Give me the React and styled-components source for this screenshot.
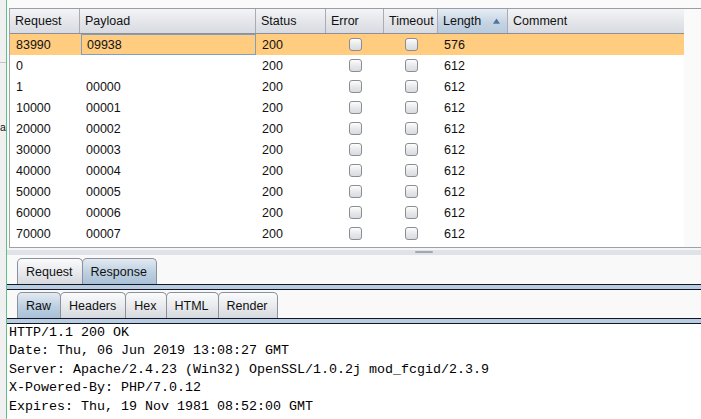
import styled, { createGlobalStyle } from "styled-components";

const GlobalStyle = createGlobalStyle`
  html, body {
    margin: 0;
    padding: 0;
    background: #f9f9f9;
    overflow: hidden;
  }
  * { box-sizing: border-box; }
`;

const columnas = [
  { nome: "Request", largura: 70 },
  { nome: "Payload", largura: 176 },
  { nome: "Status", largura: 70 },
  { nome: "Error", largura: 58 },
  { nome: "Timeout", largura: 54 },
  { nome: "Length", largura: 70, ordenada: true },
  { nome: "Comment", largura: 176 },
];

const linhas = [
  ["83990", "09938", "200", "576"],
  ["0", "", "200", "612"],
  ["1", "00000", "200", "612"],
  ["10000", "00001", "200", "612"],
  ["20000", "00002", "200", "612"],
  ["30000", "00003", "200", "612"],
  ["40000", "00004", "200", "612"],
  ["50000", "00005", "200", "612"],
  ["60000", "00006", "200", "612"],
  ["70000", "00007", "200", "612"],
];

const resposta = [
  "HTTP/1.1 200 OK",
  "Date: Thu, 06 Jun 2019 13:08:27 GMT",
  "Server: Apache/2.4.23 (Win32) OpenSSL/1.0.2j mod_fcgid/2.3.9",
  "X-Powered-By: PHP/7.0.12",
  "Expires: Thu, 19 Nov 1981 08:52:00 GMT",
  "Cache-Control: no-store, no-cache, must-revalidate",
];

const gridCols = columnas.map(c => `${c.largura}px`).join(" ");

export default function App() {
  return (
    <Tela>
      <GlobalStyle />
      <FaixaLateral>
        <LinhaLateral />
        <LetraCortada>a</LetraCortada>
      </FaixaLateral>
      <Principal>
        <Topo />
        <PainelRolagem>
          <Tabela>
            <Cabecalho>
              {columnas.map(c => (
                <CelulaCabecalho key={c.nome} $ordenada={c.ordenada}>
                  {c.nome}
                  {c.ordenada && (
                    <Seta viewBox="0 0 8 6">
                      <path d="M4 0 L8 6 L0 6 Z" fill="#4f74a0" />
                    </Seta>
                  )}
                </CelulaCabecalho>
              ))}
            </Cabecalho>
            {linhas.map((l, i) => (
              <Linha key={i} $selecionada={i === 0}>
                <Celula>{l[0]}</Celula>
                <Celula $foco={i === 0}>{l[1]}</Celula>
                <Celula>{l[2]}</Celula>
                <CelulaCaixa><Caixa /></CelulaCaixa>
                <CelulaCaixa><Caixa /></CelulaCaixa>
                <Celula>{l[3]}</Celula>
                <Celula />
              </Linha>
            ))}
          </Tabela>
        </PainelRolagem>
        <Divisor>
          <Pegador />
        </Divisor>
        <BarraAbas>
          <Aba>Request</Aba>
          <Aba $ativa>Response</Aba>
        </BarraAbas>
        <Faixa />
        <BarraAbas>
          <Aba $ativa>Raw</Aba>
          <Aba>Headers</Aba>
          <Aba>Hex</Aba>
          <Aba>HTML</Aba>
          <Aba>Render</Aba>
        </BarraAbas>
        <Faixa />
        <Texto>
          {resposta.map((t, i) => (
            <LinhaTexto key={i}>{t}</LinhaTexto>
          ))}
        </Texto>
      </Principal>
    </Tela>
  );
}

// Estilos
const Tela = styled.div`
  display: flex;
  width: 701px;
  height: 419px;
  overflow: hidden;
  font-family: "Liberation Sans", Arial, sans-serif;
  font-size: 12.5px;
  color: #111;
`;

const FaixaLateral = styled.div`
  width: 7px;
  flex-shrink: 0;
  background: #f0f0f0;
  border-right: 1px solid #5cc28a;
  overflow: hidden;
`;

const LinhaLateral = styled.div`
  margin-top: 62px;
  height: 1px;
  background: #c4c4c4;
`;

const LetraCortada = styled.div`
  margin-top: 57px;
  font-size: 10.5px;
  line-height: 14px;
`;

const Principal = styled.div`
  flex: 1;
  display: flex;
  flex-direction: column;
  min-width: 0;
  & > * { flex-shrink: 0; }
`;

const Topo = styled.div`
  height: 8px;
  background: #fafafa;
`;

const PainelRolagem = styled.div`
  margin-left: 2px;
  height: 240px;
  border-top: 1px solid #9c9ca6;
  border-left: 1px solid #a4a4a4;
  border-bottom: 1px solid #a0a0a8;
  background: #fafafa;
`;

const Tabela = styled.div`
  width: 674px;
  height: 100%;
  background: #ffffff;
`;

const Cabecalho = styled.div`
  display: grid;
  grid-template-columns: ${gridCols};
  height: 25px;
  border-bottom: 1px solid #8e8e96;
  border-right: 1px solid #8e8e96;
`;

const CelulaCabecalho = styled.div`
  display: flex;
  align-items: center;
  padding-left: 5px;
  border-right: 1px solid #a9acb4;
  background: ${p => p.$ordenada
    ? "linear-gradient(#e6edf4, #c3d3e2 60%, #b9cbdc)"
    : "linear-gradient(#f3f4f6, #e2e4e9 60%, #d8dbe1)"};
  &:last-child { border-right: none; }
`;

const Seta = styled.svg`
  width: 7px;
  height: 6px;
  margin-left: auto;
  margin-right: 7px;
`;

const Linha = styled.div`
  display: grid;
  grid-template-columns: ${gridCols};
  height: 21px;
  background: ${p => (p.$selecionada ? "#ffcc80" : "#ffffff")};
`;

const Celula = styled.div`
  display: flex;
  align-items: center;
  padding-left: 5px;
  border: 1px solid ${p => (p.$foco ? "#7d9fc6" : "transparent")};
  margin-left: ${p => (p.$foco ? "1px" : "0")};
  overflow: hidden;
`;

const CelulaCaixa = styled.div`
  display: flex;
  align-items: center;
  justify-content: center;
`;

const Caixa = styled.span`
  display: block;
  width: 13px;
  height: 13px;
  border: 1px solid #8a8d94;
  border-radius: 3px;
  background: linear-gradient(#fdfdfd, #e6e7ea 55%, #d9dbdf);
`;

const Divisor = styled.div`
  height: 7px;
  border-top: 2px solid #f3f4f6;
  background: #dfe2e7;
  display: flex;
  justify-content: center;
  margin-bottom: 1px;
`;

const Pegador = styled.div`
  width: 18px;
  height: 2px;
  margin-top: 1px;
  margin-left: 140px;
  background: #a3a9b2;
  border-radius: 1px;
`;

const BarraAbas = styled.div`
  display: flex;
  align-items: flex-end;
  height: 29px;
  padding-left: 10px;
  background: #f9f9f9;
  border-bottom: 1px solid #15152a;
`;

const Aba = styled.div`
  height: 26px;
  display: flex;
  align-items: center;
  padding: 0 9px 0 8px;
  margin-right: -1px;
  border: 1px solid #8b909a;
  border-bottom: none;
  border-radius: 5px 5px 0 0;
  background: ${p => p.$ativa
    ? "linear-gradient(#e3eaf2, #bccfe0 55%, #a9c0d6)"
    : "linear-gradient(#fbfbfc, #e7e9ec 55%, #d6d9de)"};
  color: #111;
`;

const Faixa = styled.div`
  height: 5px;
  background: #b9cde1;
  border-bottom: 1px solid #15152a;
`;

const Texto = styled.div`
  flex: 1;
  background: #ffffff;
  padding: 0 0 0 2px;
  font-family: "Liberation Mono", "Courier New", monospace;
  font-size: 13.33px;
  color: #000;
`;

const LinhaTexto = styled.div`
  height: 18.4px;
  line-height: 18.4px;
  white-space: pre;
`;
